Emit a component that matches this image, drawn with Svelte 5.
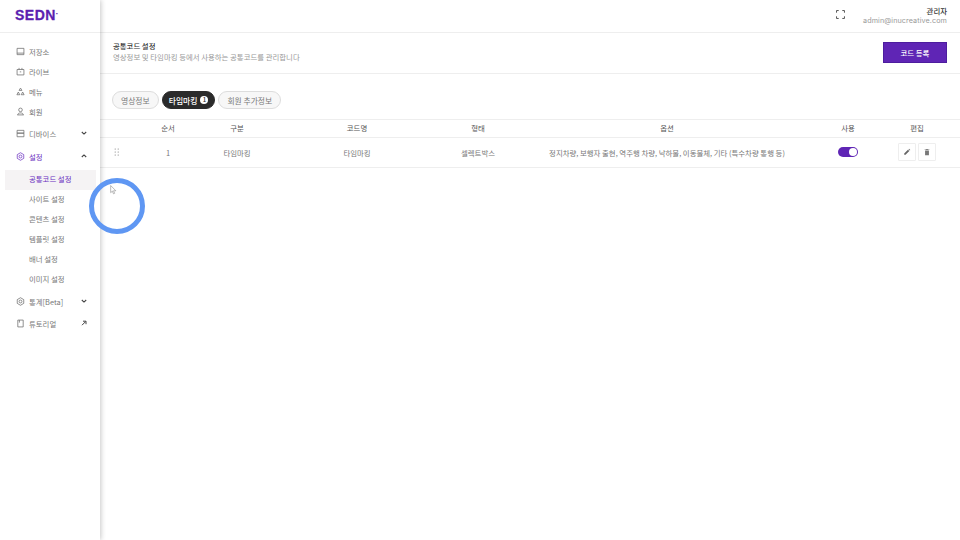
<script>
  const menuTop = [
    { name: "저장소", icon: "box" },
    { name: "라이브", icon: "live" },
    { name: "메뉴", icon: "menu" },
    { name: "회원", icon: "user" },
  ];
  const subMenu = ["공통코드 설정", "사이트 설정", "콘텐츠 설정", "템플릿 설정", "배너 설정", "이미지 설정"];
  const tabs = ["영상정보", "타임마킹", "회원 추가정보"];
  const columns = ["", "순서", "구분", "코드명", "형태", "옵션", "사용", "편집"];
</script>

{#snippet gear(color)}
  <svg class="icon" viewBox="0 0 10 10" fill="none" stroke={color} stroke-width="0.8">
    <path d="M5 .8 8.6 2.9V7.1L5 9.2 1.4 7.1V2.9Z" />
    <circle cx="5" cy="5" r="1.6" />
  </svg>
{/snippet}

{#snippet chevron(up)}
  <svg class="chev" viewBox="0 0 8 8" fill="none" stroke="#444" stroke-width="1.1">
    <path d={up ? "M1.8 5 4 2.9 6.2 5" : "M1.8 3 4 5.1 6.2 3"} />
  </svg>
{/snippet}

<div class="page">
  <aside class="sidebar">
    <div class="logo">SEDN<sup>.</sup></div>
    <nav>
      {#each menuTop as item}
        <div class="item">
          <svg class="icon" viewBox="0 0 10 10" fill="none" stroke="#666" stroke-width="0.8">
            {#if item.icon === "box"}
              <path d="M1.2 1.5H8.8V8.5H1.2ZM1.2 6.8H8.8" />
            {:else if item.icon === "live"}
              <path d="M1.2 2.8H8.8V8.8H1.2ZM3.4 1V2.8M6.6 1V2.8M4.2 5.4H5.8" />
            {:else if item.icon === "menu"}
              <path d="M5 1.2 6.6 3.8H3.4ZM1 8.6 2.6 5.6 4.2 8.6ZM5.8 8.6 7.4 5.6 9 8.6Z" />
            {:else}
              <circle cx="5" cy="3.2" r="2" />
              <path d="M1.4 8.8H8.6M2 8.8C2 7 3.5 6.6 5 6.6S8 7 8 8.8" />
            {/if}
          </svg>
          <span>{item.name}</span>
        </div>
      {/each}
      <div class="item device">
        <svg class="icon" viewBox="0 0 10 10" fill="none" stroke="#666" stroke-width="0.8">
          <path d="M1.2 1.5H8.8V4.6H1.2ZM1.2 4.6H8.8V8.6H1.2Z" />
        </svg>
        <span>디바이스</span>
        {@render chevron(false)}
      </div>
      <div class="item settings">
        {@render gear("#6a2fc0")}
        <span>설정</span>
        {@render chevron(true)}
      </div>
      <div class="sub">
        {#each subMenu as name, index}
          <div class="sub-item" class:selected={index === 0}>{name}</div>
        {/each}
      </div>
      <div class="item stats">
        {@render gear("#666")}
        <span>통계[Beta]</span>
        {@render chevron(false)}
      </div>
      <div class="item tutorial">
        <svg class="icon" viewBox="0 0 10 10" fill="none" stroke="#666" stroke-width="0.8">
          <path d="M2 1.2H8V8.8H2ZM3.8 1.2V4" />
        </svg>
        <span>튜토리얼</span>
        <svg class="chev" viewBox="0 0 8 8" fill="none" stroke="#444" stroke-width="1">
          <path d="M2 6.2 5.6 2.6M3 2.2H6V5.2" />
        </svg>
      </div>
    </nav>
  </aside>

  <main>
    <header class="topbar">
      <svg class="fullscreen" viewBox="0 0 10 10" fill="none" stroke="#444" stroke-width="1">
        <path d="M.6 3V.6H3M7 .6H9.4V3M9.4 7V9.4H7M3 9.4H.6V7" />
      </svg>
      <div class="account">
        <strong>관리자</strong>
        <span>admin@inucreative.com</span>
      </div>
    </header>

    <section class="title-bar">
      <div class="title-text">
        <h1>공통코드 설정</h1>
        <p>영상정보 및 타임마킹 등에서 사용하는 공통코드를 관리합니다</p>
      </div>
      <button class="primary">코드 등록</button>
    </section>

    <section class="tabs">
      {#each tabs as tab, index}
        <div class="tab" class:on={index === 1}>
          {tab}
          {#if index === 1}<i class="count">1</i>{/if}
        </div>
      {/each}
    </section>

    <section class="table">
      <div class="row head">
        {#each columns as col}
          <div>{col}</div>
        {/each}
      </div>
      <div class="row body">
        <div>
          <svg class="grip" viewBox="0 0 6 8" fill="#777">
            <circle cx="1.2" cy="1" r=".6" /><circle cx="4.2" cy="1" r=".6" />
            <circle cx="1.2" cy="4" r=".6" /><circle cx="4.2" cy="4" r=".6" />
            <circle cx="1.2" cy="7" r=".6" /><circle cx="4.2" cy="7" r=".6" />
          </svg>
        </div>
        <div>1</div>
        <div>타임마킹</div>
        <div>타임마킹</div>
        <div>셀렉트박스</div>
        <div>정지차량, 보행자 출현, 역주행 차량, 낙하물, 이동물체, 기타 (특수차량 통행 등)</div>
        <div><span class="switch"><b></b></span></div>
        <div class="actions">
          <span class="icon-btn">
            <svg viewBox="0 0 10 10" fill="#666"><path d="M1.5 8.5V6.8L6.2 2.1 7.9 3.8 3.2 8.5ZM6.8 1.5 7.6 .9 9.1 2.4 8.5 3.2Z" /></svg>
          </span>
          <span class="icon-btn">
            <svg viewBox="0 0 10 10" fill="#777"><path d="M2.6 3.2H7.4V9H2.6ZM2 1.8H4V1.1H6V1.8H8V2.6H2Z" /></svg>
          </span>
        </div>
      </div>
    </section>
  </main>

  <div class="click-ring"></div>
  <svg class="cursor" viewBox="0 0 8 12" fill="#fff" stroke="#888" stroke-width=".7">
    <path d="M.6.6V9.2L2.6 7.4 4 10.6 5.4 10 4 6.9H6.8Z" />
  </svg>
</div>

<style>
  :global(body) {
    margin: 0;
    background: #fff;
  }

  .page {
    position: relative;
    display: flex;
    width: 960px;
    height: 540px;
    overflow: hidden;
    font-family: "Noto Sans CJK KR", "Noto Sans", sans-serif;
    font-size: 7.4px;
    color: #777;
  }

  .sidebar {
    width: 100px;
    flex: none;
    background: #fff;
    box-shadow: 1px 0 5px rgba(0, 0, 0, 0.22);
    z-index: 1;
  }

  .logo {
    height: 33px;
    box-sizing: border-box;
    padding: 7px 0 0 15px;
    border-bottom: 1px solid #eee;
    font-family: "Liberation Sans", sans-serif;
    font-size: 14px;
    line-height: 16px;
    font-weight: 700;
    letter-spacing: 0.5px;
    -webkit-text-stroke: 0.3px #5b1fb0;
    color: #5b1fb0;
  }

  .logo sup {
    font-size: 6px;
    line-height: 0;
  }

  nav {
    padding-top: 8px;
  }

  .item {
    display: flex;
    align-items: center;
    height: 20px;
    padding: 0 12px 0 16px;
    color: #777;
  }

  .item span {
    flex: 1;
    margin-left: 4px;
  }

  .device {
    margin-top: 2px;
  }

  .settings {
    margin-top: 3px;
    color: #6a2fc0;
  }

  .stats {
    margin-top: 1px;
  }

  .tutorial {
    margin-top: 2px;
  }

  .icon {
    width: 9px;
    height: 9px;
    flex: none;
  }

  .chev {
    width: 8px;
    height: 8px;
    flex: none;
  }

  .sub {
    margin-top: 4px;
  }

  .sub-item {
    height: 20px;
    margin: 0 4px 0 5px;
    padding-left: 24px;
    line-height: 18px;
    color: #777;
  }

  .sub-item.selected {
    background: #f5f3f4;
    color: #6a2fc0;
  }

  main {
    flex: 1;
    min-width: 0;
  }

  .topbar {
    display: flex;
    align-items: center;
    justify-content: flex-end;
    height: 33px;
    box-sizing: border-box;
    padding: 0 13px 1px 0;
    border-bottom: 1px solid #eee;
  }

  .fullscreen {
    width: 9px;
    height: 9px;
    margin: 0 18px 2px 0;
  }

  .account {
    display: flex;
    flex-direction: column;
    align-items: flex-end;
    line-height: 10px;
  }

  .account strong {
    color: #333;
    font-weight: 500;
  }

  .account span {
    font-family: Inter, sans-serif;
    font-size: 7.2px;
    color: #999;
    letter-spacing: 0.1px;
  }

  .title-bar {
    display: flex;
    align-items: center;
    justify-content: space-between;
    height: 41px;
    box-sizing: border-box;
    padding: 0 13px 1px 13px;
    border-bottom: 1px solid #eee;
  }

  .title-text {
    margin-bottom: 2px;
  }

  h1 {
    margin: 0;
    font-size: 7.4px;
    line-height: 10px;
    font-weight: 500;
    color: #333;
  }

  .title-bar p {
    margin: 0;
    line-height: 11px;
    color: #999;
  }

  .primary {
    width: 64px;
    height: 21px;
    padding: 0;
    border: 1px solid #4d1d9e;
    background: #5f25b5;
    color: #fff;
    font: 500 7.4px "Noto Sans CJK KR", sans-serif;
  }

  .tabs {
    display: flex;
    gap: 3px;
    align-items: center;
    height: 46px;
    box-sizing: border-box;
    padding: 7px 0 0 12px;
    border-bottom: 1px solid #eee;
    font-size: 7.8px;
  }

  .tab {
    display: flex;
    align-items: center;
    gap: 3px;
    height: 18px;
    box-sizing: border-box;
    padding: 0 8px;
    border: 1px solid #ddd;
    border-radius: 9px;
    background: #f7f7f7;
    color: #777;
  }

  .tab.on {
    padding: 0 6px;
    border-color: #2b2b2b;
    background: #2b2b2b;
    color: #fff;
    font-weight: 500;
  }

  .count {
    width: 8px;
    height: 8px;
    border-radius: 50%;
    background: #fff;
    color: #2b2b2b;
    font-style: normal;
    font-size: 6px;
    line-height: 8px;
    text-align: center;
  }

  .row {
    display: grid;
    grid-template-columns: 33px 70px 68px 172px 70px 308px 54px 84px;
    align-items: center;
    text-align: center;
    border-bottom: 1px solid #eee;
  }

  .head {
    height: 18px;
    box-sizing: border-box;
    padding-bottom: 3px;
    color: #555;
  }

  .body {
    height: 30px;
    box-sizing: border-box;
    padding-bottom: 1px;
  }

  .grip {
    display: block;
    width: 6px;
    height: 8px;
    margin: 0 auto;
  }

  .switch {
    display: block;
    position: relative;
    width: 20px;
    height: 10px;
    margin: 0 auto;
    border-radius: 5px;
    background: #5f25b5;
  }

  .switch b {
    position: absolute;
    top: 1px;
    right: 1px;
    width: 8px;
    height: 8px;
    border-radius: 50%;
    background: #fff;
  }

  .actions {
    display: flex;
    justify-content: center;
    gap: 2px;
  }

  .icon-btn {
    display: flex;
    align-items: center;
    justify-content: center;
    box-sizing: border-box;
    width: 18px;
    height: 18px;
    border: 1px solid #eee;
    border-radius: 1px;
  }

  .icon-btn svg {
    width: 8px;
    height: 8px;
  }

  .click-ring {
    position: absolute;
    left: 89px;
    top: 178px;
    width: 56px;
    height: 56px;
    box-sizing: border-box;
    border: 5px solid #5f97f3;
    border-radius: 50%;
    z-index: 2;
  }

  .cursor {
    position: absolute;
    left: 110px;
    top: 185px;
    width: 7px;
    height: 10px;
    z-index: 3;
  }
</style>
